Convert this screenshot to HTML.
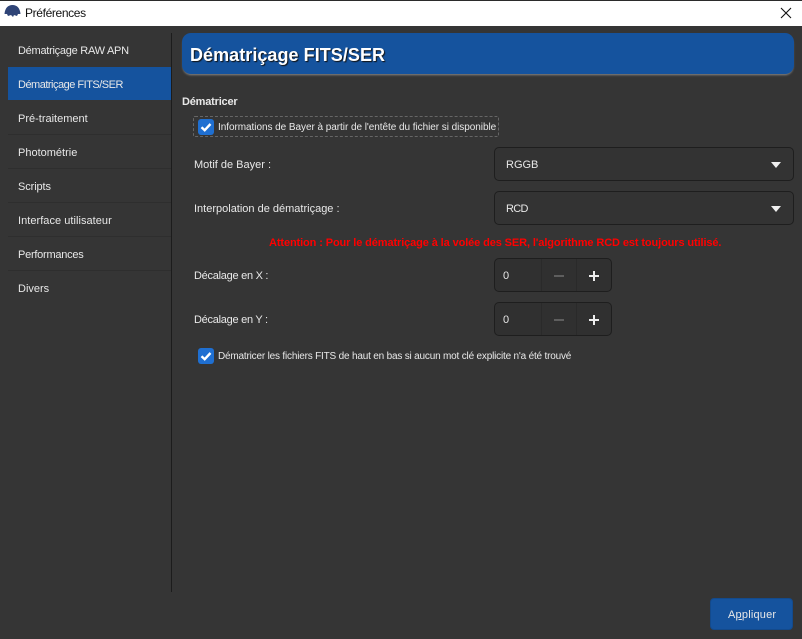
<!DOCTYPE html>
<html><head><meta charset="utf-8"><style>
html,body{margin:0;padding:0;background:#353535}
#w{position:relative;width:802px;height:639px;overflow:hidden;background:#353535;font-family:"Liberation Sans",sans-serif;font-size:11px;color:#e8e8e8}
#w div,#w span.t{position:absolute;white-space:nowrap;box-sizing:border-box}
.t{line-height:14px;height:14px}
.sep{left:8px;width:163px;height:1px;background:#2e2e2e}
.cb{background:#1f6fd1;border-radius:3px;width:16px;height:16px}
.cb svg{position:absolute;left:0;top:0}
.combo{left:494px;width:300px;height:34px;border:1px solid #1e1e1e;border-radius:5px;background:#333}
.arr{left:771px;width:0;height:0;border-left:5.5px solid transparent;border-right:5.5px solid transparent;border-top:6px solid #f0f0f0}
.spin{left:494px;width:118px;height:34px;border:1px solid #1e1e1e;border-radius:5px;background:#303030}
.vl{width:1px;height:32px;background:#2a2a2a;top:0}
</style></head><body><div id="w">
<div style="left:0;top:0;width:802px;height:26px;background:#fff;border-top:1px solid #2b2b2b"></div>
<svg style="position:absolute;left:4px;top:4px" width="17" height="14" viewBox="0 0 17 14"><path d="M0.5 10 C1 4 4 1 8.5 1 C13 1 16 4 16.5 10 L14 10 L13 12 L10 11 L9 13 L7 11 L4 12 L3 10Z" fill="#2f4477"/></svg>
<span class="t" style="position:absolute;left:25px;top:6px;color:#111;font-size:12px;letter-spacing:-.36px">Préférences</span>
<svg style="position:absolute;left:780px;top:7px" width="12" height="12" viewBox="0 0 12 12"><path d="M1 1L11 11M11 1L1 11" stroke="#111" stroke-width="1.1" fill="none"/></svg>

<div style="left:171px;top:33px;width:1px;height:559px;background:#1c1c1c"></div>
<div style="left:8px;top:67px;width:163px;height:33px;background:#15539e"></div>
<span class="t" style="position:absolute;left:18px;top:44px;letter-spacing:-.26px">Dématriçage RAW APN</span>
<span class="t" style="position:absolute;left:18px;top:78px;letter-spacing:-.5px">Dématriçage FITS/SER</span>
<span class="t" style="position:absolute;left:18px;top:112px">Pré-traitement</span>
<span class="t" style="position:absolute;left:18px;top:146px">Photométrie</span>
<span class="t" style="position:absolute;left:18px;top:180px;letter-spacing:-.1px">Scripts</span>
<span class="t" style="position:absolute;left:18px;top:214px;letter-spacing:.04px">Interface utilisateur</span>
<span class="t" style="position:absolute;left:18px;top:248px;letter-spacing:-.25px">Performances</span>
<span class="t" style="position:absolute;left:18px;top:282px">Divers</span>
<div class="sep" style="top:134px"></div><div class="sep" style="top:168px"></div><div class="sep" style="top:202px"></div><div class="sep" style="top:236px"></div><div class="sep" style="top:270px"></div>

<div style="left:182px;top:33px;width:612px;height:41px;background:#15539e;border-radius:9px;box-shadow:0 2px 2px -1px #888"></div>
<span class="t" style="position:absolute;left:190px;top:45px;height:20px;line-height:20px;font-size:18px;font-weight:bold;color:#fff;letter-spacing:.05px;text-shadow:1px 1px 1px #111">Dématriçage FITS/SER</span>

<span class="t" style="position:absolute;left:182px;top:95px;font-weight:bold;letter-spacing:-.2px">Dématricer</span>
<div style="left:193px;top:116px;width:306px;height:21px;border:1px dashed #666;border-radius:2px"></div>
<div class="cb" style="left:198px;top:119px"><svg width="16" height="16" viewBox="0 0 16 16"><path d="M3.5 8.2L6.7 11.2L12.5 5" stroke="#fff" stroke-width="2.4" fill="none"/></svg></div>
<span class="t" style="position:absolute;left:218px;top:121px;font-size:10px;letter-spacing:-.05px">Informations de Bayer à partir de l'entête du fichier si disponible</span>

<span class="t" style="position:absolute;left:194px;top:158px">Motif de Bayer :</span>
<div class="combo" style="top:147px"></div>
<span class="t" style="position:absolute;left:506px;top:158px">RGGB</span>
<div class="arr" style="top:162px"></div>

<span class="t" style="position:absolute;left:194px;top:202px">Interpolation de dématriçage :</span>
<div class="combo" style="top:191px"></div>
<span class="t" style="position:absolute;left:506px;top:202px;letter-spacing:-.7px">RCD</span>
<div class="arr" style="top:206px"></div>

<span class="t" style="position:absolute;left:269px;top:236px;color:#f00;font-weight:bold;font-size:11px;letter-spacing:-.11px">Attention : Pour le dématriçage à la volée des SER, l'algorithme RCD est toujours utilisé.</span>

<span class="t" style="position:absolute;left:194px;top:269px;letter-spacing:-.27px">Décalage en X :</span>
<div class="spin" style="top:258px"><div class="vl" style="left:46px"></div><div class="vl" style="left:81px"></div></div>
<span class="t" style="position:absolute;left:503px;top:269px">0</span>
<div style="left:554px;top:275px;width:10px;height:2px;background:#5e5e5e"></div>
<div style="left:589px;top:275px;width:10px;height:2px;background:#eee"></div>
<div style="left:593px;top:271px;width:2px;height:10px;background:#eee"></div>

<span class="t" style="position:absolute;left:194px;top:313px;letter-spacing:-.27px">Décalage en Y :</span>
<div class="spin" style="top:302px"><div class="vl" style="left:46px"></div><div class="vl" style="left:81px"></div></div>
<span class="t" style="position:absolute;left:503px;top:313px">0</span>
<div style="left:554px;top:319px;width:10px;height:2px;background:#5e5e5e"></div>
<div style="left:589px;top:319px;width:10px;height:2px;background:#eee"></div>
<div style="left:593px;top:315px;width:2px;height:10px;background:#eee"></div>

<div class="cb" style="left:198px;top:348px"><svg width="16" height="16" viewBox="0 0 16 16"><path d="M3.5 8.2L6.7 11.2L12.5 5" stroke="#fff" stroke-width="2.4" fill="none"/></svg></div>
<span class="t" style="position:absolute;left:218px;top:350px;font-size:10px;letter-spacing:-.19px">Dématricer les fichiers FITS de haut en bas si aucun mot clé explicite n'a été trouvé</span>

<div style="left:710px;top:598px;width:83px;height:32px;background:#15539e;border-radius:4px;border:1px solid #134a8c"></div>
<span class="t" style="position:absolute;left:728px;top:608px;letter-spacing:.2px"><span>A</span><span style="text-decoration:underline">p</span>pliquer</span>
</div></body></html>
